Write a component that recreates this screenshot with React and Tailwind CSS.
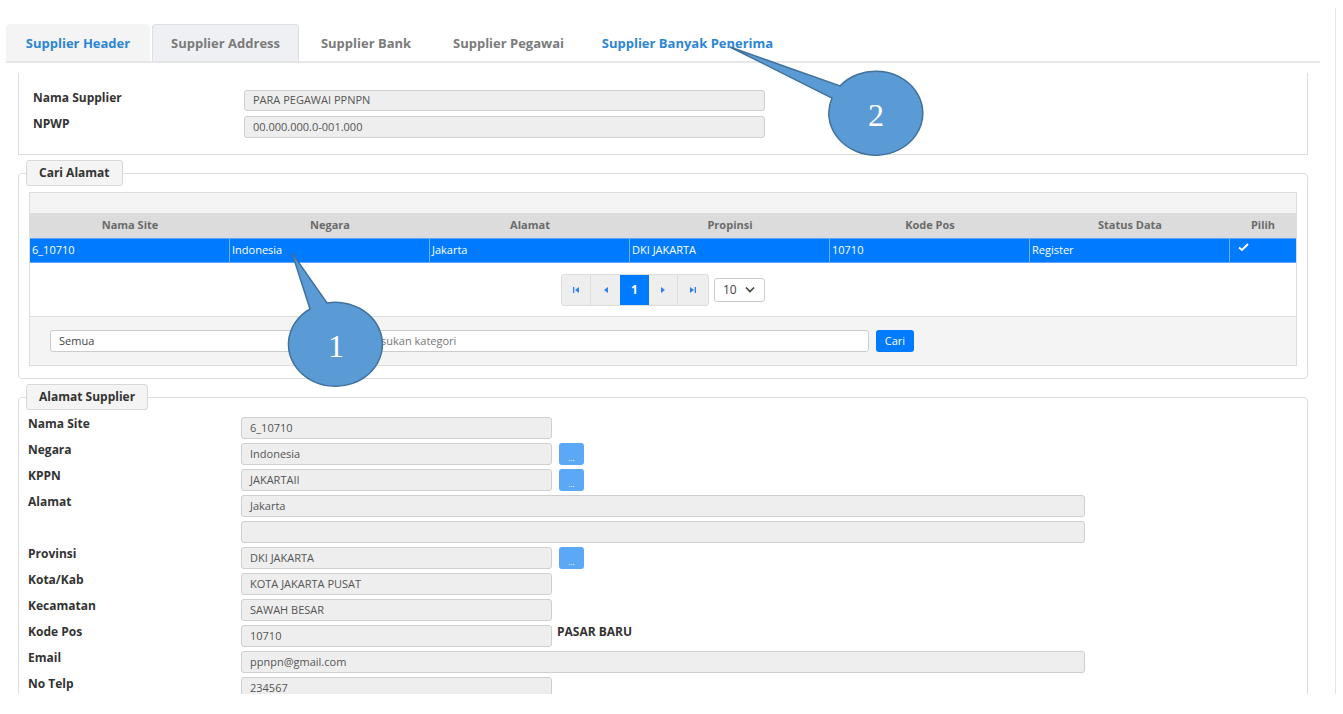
import React from 'react';

const FONT = { fontFamily: '"Open Sans", "Noto Sans", sans-serif' };

function Tab({ label, active, blue, w }) {
    return (
        <div
            className={
                'h-[37px] flex items-center justify-center text-[13px] font-bold rounded-t-[4px] mr-[2px] ' +
                (active ? 'bg-[#eef0f3] border border-[#dcdfe3] border-b-0 pt-[2px] ' : blue === 'first' ? 'bg-[#f4f4f4] pt-[2px] ' : 'bg-white pt-[2px] ') +
                (blue ? 'text-[#2b86d6] ' : 'text-[#7b7b7b] ')
            }
            style={{ width: w }}
        >
            {label}
        </div>
    );
}

function ReadInput({ value, wide }) {
    return (
        <div
            className={
                'h-[22px] rounded-[3px] border border-[#cfcfcf] bg-[#eeeeee] px-[8px] flex items-center text-[11px] text-[#555] ' +
                (wide ? 'w-[844px]' : 'w-[311px]')
            }
        >
            {value}
        </div>
    );
}

function DotBtn() {
    return (
        <div className="ml-[7px] w-[25px] h-[22px] rounded-[3px] bg-[#5aa8f6] flex items-end justify-center pb-[3px] text-white text-[8px] leading-none">
            ...
        </div>
    );
}

function PagerIcon({ kind }) {
    return (
        <svg width="8" height="8" viewBox="0 0 8 8" fill="#2f7ff5">
            {kind === 'first' && (<><rect x="1" y="1" width="1.3" height="6" /><path d="M7 1 L3 4 L7 7 Z" /></>)}
            {kind === 'prev' && <path d="M6 1 L2 4 L6 7 Z" />}
            {kind === 'next' && <path d="M2 1 L6 4 L2 7 Z" />}
            {kind === 'last' && (<><path d="M1 1 L5 4 L1 7 Z" /><rect x="5.7" y="1" width="1.3" height="6" /></>)}
        </svg>
    );
}

const cols = ['Nama Site', 'Negara', 'Alamat', 'Propinsi', 'Kode Pos', 'Status Data'];
const row = ['6_10710', 'Indonesia', 'Jakarta', 'DKI JAKARTA', '10710', 'Register'];

export default function App() {
    const fields = [
        { label: 'Nama Site', value: '6_10710' },
        { label: 'Negara', value: 'Indonesia', btn: true },
        { label: 'KPPN', value: 'JAKARTAII', btn: true },
        { label: 'Alamat', value: 'Jakarta', wide: true },
        { label: '', value: '', wide: true },
        { label: 'Provinsi', value: 'DKI JAKARTA', btn: true },
        { label: 'Kota/Kab', value: 'KOTA JAKARTA PUSAT' },
        { label: 'Kecamatan', value: 'SAWAH BESAR' },
        { label: 'Kode Pos', value: '10710', extra: 'PASAR BARU' },
        { label: 'Email', value: 'ppnpn@gmail.com', wide: true },
        { label: 'No Telp', value: '234567' },
    ];

    return (
        <div className="relative w-[1343px] h-[714px] bg-white overflow-hidden text-[#333]" style={FONT}>
            <div className="flex h-[694px] overflow-hidden">
                <div className="w-[1335px] pt-[24px]">
                    {/* tabs */}
                    <div className="ml-[6px] w-[1314px] flex border-b-2 border-[#e6e6e6]">
                        <Tab label="Supplier Header" blue="first" w={144} />
                        <Tab label="Supplier Address" active w={147} />
                        <Tab label="Supplier Bank" w={130} />
                        <Tab label="Supplier Pegawai" w={151} />
                        <Tab label="Supplier Banyak Penerima" blue="last" w={203} />
                    </div>

                    {/* supplier info */}
                    <div className="ml-[18px] mt-[10px] w-[1290px] h-[82px] border border-t-0 border-[#dddddd] pt-[17px] pl-[14px]">
                        <div className="flex items-start mb-[5px]">
                            <div className="w-[211px] text-[12px] leading-[16px] font-bold">Nama Supplier</div>
                            <div className="w-[521px] h-[21px] rounded-[3px] border border-[#cfcfcf] bg-[#eeeeee] px-[8px] flex items-center text-[11px] text-[#555]">PARA PEGAWAI PPNPN</div>
                        </div>
                        <div className="flex items-start">
                            <div className="w-[211px] text-[12px] leading-[16px] font-bold">NPWP</div>
                            <div className="w-[521px] h-[22px] rounded-[3px] border border-[#cfcfcf] bg-[#eeeeee] px-[8px] flex items-center text-[11px] text-[#555]">00.000.000.0-001.000</div>
                        </div>
                    </div>

                    {/* cari alamat */}
                    <fieldset className="ml-[18px] mt-[5px] w-[1290px] border border-[#dddddd] rounded-[4px] px-[10px] pb-[12px]">
                        <legend className="-ml-[3px] h-[26px] px-[12px] border border-[#d8d8d8] rounded-[3px] bg-[#f4f4f4] text-[12px] font-bold flex items-center">
                            Cari Alamat
                        </legend>
                        <div className="mt-[6px] border border-[#dddddd]">
                            <div className="h-[20px] bg-[#f4f4f4]" />
                            <div className="flex h-[25px] bg-[#dcdcdc] text-[11px] font-bold text-[#6b6b6b]">
                                {cols.map((c) => (
                                    <div key={c} className="w-[200px] flex items-center justify-center">{c}</div>
                                ))}
                                <div className="flex-1 flex items-center justify-center">Pilih</div>
                            </div>
                            <div className="flex h-[25px] bg-[#007bff] text-[11px] text-white border-y border-[#5aa6ff]">
                                {row.map((c) => (
                                    <div key={c} className="w-[200px] flex items-center px-[2px] border-r border-[#6fb2ff]">{c}</div>
                                ))}
                                <div className="flex-1 pl-[8px] pt-[4px]">
                                    <svg width="11" height="9" viewBox="0 0 11 9" fill="none" stroke="white" strokeWidth="2">
                                        <path d="M1 4.5 L4 7 L10 1" />
                                    </svg>
                                </div>
                            </div>
                            <div className="h-[53px] flex items-center justify-center gap-[5px]">
                                <div className="flex h-[32px] rounded-[3px] border border-[#dddddd] bg-[#eeeeee] overflow-hidden">
                                    <div className="w-[29px] flex items-center justify-center border-r border-[#dddddd]"><PagerIcon kind="first" /></div>
                                    <div className="w-[29px] flex items-center justify-center"><PagerIcon kind="prev" /></div>
                                    <div className="w-[29px] flex items-center justify-center bg-[#007bff] text-white text-[12px] font-bold">1</div>
                                    <div className="w-[29px] flex items-center justify-center border-r border-[#dddddd]"><PagerIcon kind="next" /></div>
                                    <div className="w-[30px] flex items-center justify-center"><PagerIcon kind="last" /></div>
                                </div>
                                <div className="w-[51px] h-[24px] rounded-[3px] border border-[#cccccc] bg-white flex items-center justify-between pl-[8px] pr-[9px] text-[12px] text-[#444]">
                                    <span>10</span>
                                    <svg width="10" height="7" viewBox="0 0 10 7" fill="none" stroke="#444" strokeWidth="1.6">
                                        <path d="M1 1.5 L5 5.5 L9 1.5" />
                                    </svg>
                                </div>
                            </div>
                            <div className="h-[49px] bg-[#f4f4f4] border-t border-[#dddddd] flex items-center pl-[20px] gap-[6px]">
                                <div className="w-[300px] h-[22px] rounded-[3px] border border-[#cccccc] bg-white px-[8px] flex items-center text-[11px] text-[#444]">Semua</div>
                                <div className="w-[513px] h-[22px] rounded-[3px] border border-[#cccccc] bg-white px-[8px] flex items-center text-[11px] text-[#777]">Masukan kategori</div>
                                <div className="ml-[1px] w-[38px] h-[22px] rounded-[3px] bg-[#007bff] text-white text-[11px] flex items-center justify-center">Cari</div>
                            </div>
                        </div>
                    </fieldset>

                    {/* alamat supplier */}
                    <fieldset className="ml-[18px] mt-[5px] w-[1290px] border border-[#dddddd] rounded-[4px] pl-[9px] pb-[12px]">
                        <legend className="-ml-[2px] h-[26px] px-[12px] border border-[#d8d8d8] rounded-[3px] bg-[#f4f4f4] text-[12px] font-bold flex items-center">
                            Alamat Supplier
                        </legend>
                        <div className="mt-[7px] flex flex-col gap-[4px]">
                            {fields.map((f, i) => (
                                <div key={i} className="flex items-start">
                                    <div className="w-[213px] text-[12px] font-bold leading-[14px]">{f.label}</div>
                                    <ReadInput value={f.value} wide={f.wide} />
                                    {f.btn && <DotBtn />}
                                    {f.extra && <div className="ml-[5px] text-[12px] font-bold leading-[14px]">{f.extra}</div>}
                                </div>
                            ))}
                        </div>
                    </fieldset>
                </div>
                <div className="mt-[8px] w-px bg-[#dfe5ec]" />
            </div>

            {/* callouts */}
            <svg className="absolute inset-0 pointer-events-none" width="1343" height="714">
                <path d="M292 253 L327 303 A47 42 0 1 1 310 309 Z" fill="#5b9bd5" stroke="#41719c" strokeWidth="1.5" />
                <text x="336" y="357" textAnchor="middle" fill="white" fontSize="32" fontFamily="'Liberation Serif', serif">1</text>
                <path d="M730 47 L840 86 A47 42 0 1 1 832 98 Z" fill="#5b9bd5" stroke="#41719c" strokeWidth="1.5" />
                <text x="876" y="126" textAnchor="middle" fill="white" fontSize="32" fontFamily="'Liberation Serif', serif">2</text>
            </svg>
        </div>
    );
}
